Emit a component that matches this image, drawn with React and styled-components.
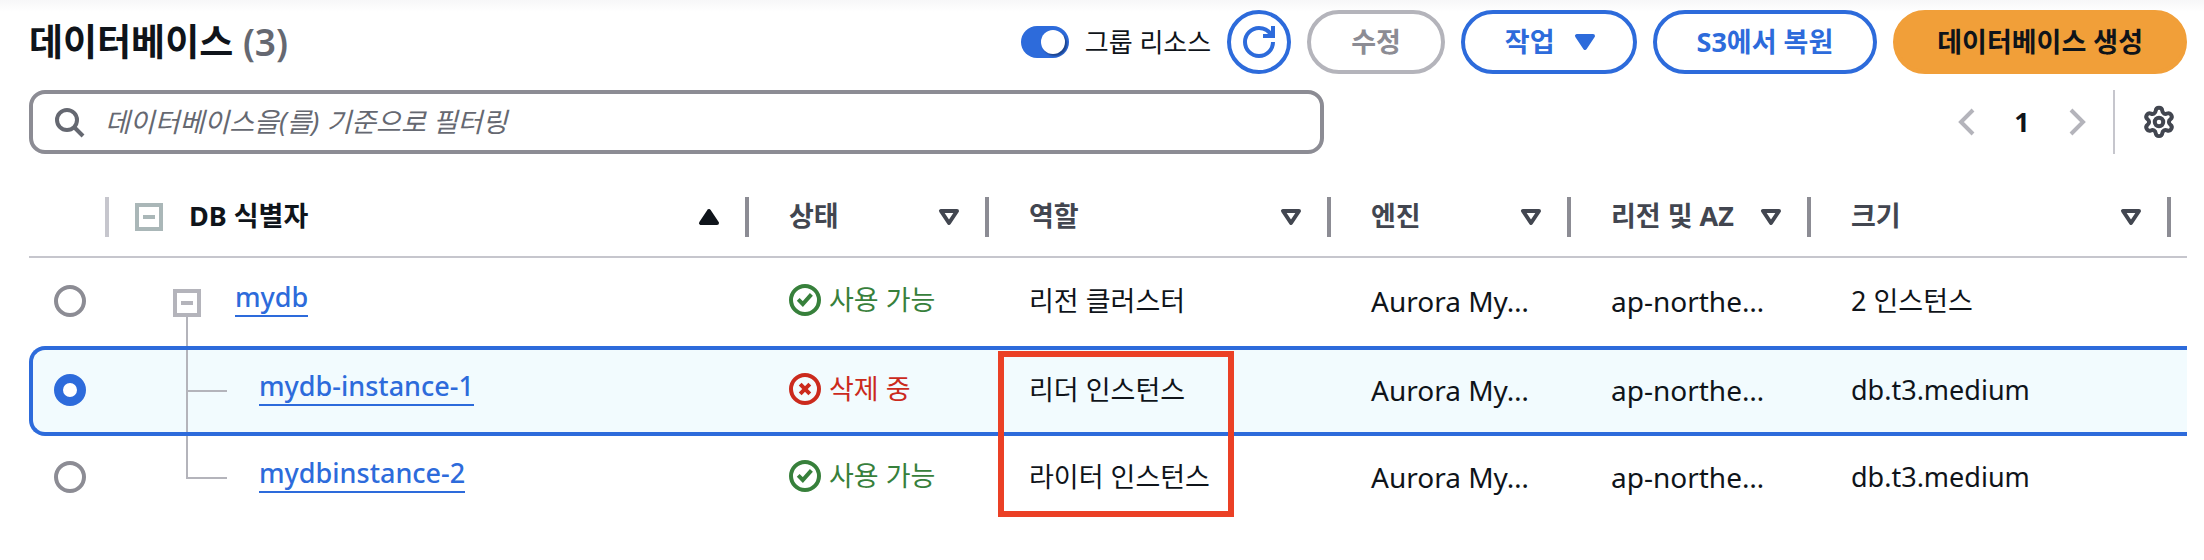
import React, { useState } from "react";
import styled, { createGlobalStyle } from "styled-components";
// Import icons
import { Settings } from "lucide-react";

const rows = [
  {
    id: "mydb",
    level: "root",
    status: "ok",
    statusText: "사용 가능",
    role: "리전 클러스터",
    size: "2 인스턴스",
  },
  {
    id: "mydb-instance-1",
    level: "middle",
    status: "error",
    statusText: "삭제 중",
    role: "리더 인스턴스",
    size: "db.t3.medium",
    marked: true,
  },
  {
    id: "mydbinstance-2",
    level: "last",
    status: "ok",
    statusText: "사용 가능",
    role: "라이터 인스턴스",
    size: "db.t3.medium",
  },
];

const columns = ["상태", "역할", "엔진", "리전 및 AZ", "크기"];

function StatusIcon({ status }) {
  return (
    <Icon viewBox="0 0 16 16" aria-hidden="true">
      <circle cx="8" cy="8" r="7" />
      {status === "ok" ? (
        <path d="M4.6 7.7 6.9 10l4.300-4.800" />
      ) : (
        <path d="m10.400 5.600-4.800 4.800M5.600 5.600l4.800 4.800" />
      )}
    </Icon>
  );
}

function SortIcon({ active }) {
  return (
    <Icon viewBox="0 0 16 16" $join="round" aria-hidden="true">
      {active ? (
        <path d="M4 11h8L8 5z" fill="currentColor" />
      ) : (
        <path d="M4 5h8l-4 6z" />
      )}
    </Icon>
  );
}

function App() {
  const [selected, setSelected] = useState("mydb-instance-1");
  const [grouped, setGrouped] = useState(true);

  return (
    <Page>
      <GlobalStyle />
      <Header>
        <Title>
          데이터베이스 <span>(3)</span>
        </Title>
        <Actions>
          <ToggleLabel>
            <Toggle
              type="checkbox"
              role="switch"
              checked={grouped}
              onChange={() => setGrouped(!grouped)}
            />
            그룹 리소스
          </ToggleLabel>
          <RefreshButton aria-label="새로 고침">
            <Icon viewBox="0 0 16 16" aria-hidden="true">
              <path d="M15 8c0 3.87-3.13 7-7 7s-7-3.13-7-7 3.13-7 7-7c2.79 0 5.2 1.63 6.33 4" />
              <path d="M10 5h5V0" />
            </Icon>
          </RefreshButton>
          <Button disabled>수정</Button>
          <MenuButton aria-haspopup="menu">
            작업
            <Icon viewBox="0 0 16 16" $join="round" aria-hidden="true">
              <path d="M4 5h8l-4 6z" fill="currentColor" />
            </Icon>
          </MenuButton>
          <Button>S3에서 복원</Button>
          <PrimaryButton>데이터베이스 생성</PrimaryButton>
        </Actions>
      </Header>

      <Tools>
        <Filter>
          <Icon viewBox="0 0 16 16" aria-hidden="true">
            <circle cx="7" cy="7" r="5" />
            <path d="m15 15-4.5-4.5" />
          </Icon>
          <FilterInput
            type="search"
            aria-label="데이터베이스 필터링"
            placeholder="데이터베이스을(를) 기준으로 필터링"
          />
        </Filter>
        <Pagination aria-label="페이지">
          <PageButton disabled aria-label="이전 페이지">
            <Icon viewBox="0 0 16 16" aria-hidden="true">
              <path d="M11 2 5 8l6 6" />
            </Icon>
          </PageButton>
          <PageNumber aria-current="page">1</PageNumber>
          <PageButton disabled aria-label="다음 페이지">
            <Icon viewBox="0 0 16 16" aria-hidden="true">
              <path d="m5 2 6 6-6 6" />
            </Icon>
          </PageButton>
          <SettingsButton aria-label="기본 설정">
            <Settings size={34} strokeWidth={2.8} />
          </SettingsButton>
        </Pagination>
      </Tools>

      <Table>
        <colgroup>
          <Col $width={80} />
          <Col $width={640} />
          <Col $width={240} />
          <Col $width={342} />
          <Col $width={240} />
          <Col $width={240} />
          <Col />
          <Col $width={16} />
        </colgroup>
        <thead>
          <tr>
            <HeadCell $light aria-label="선택">
              <HeadInner />
            </HeadCell>
            <HeadCell $first aria-sort="ascending">
              <HeadInner $active>
                <HeadToggle aria-label="모두 접기" />
                <HeadText>DB 식별자</HeadText>
                <SortIcon active />
              </HeadInner>
            </HeadCell>
            {columns.map((name) => (
              <HeadCell key={name}>
                <HeadInner>
                  <HeadText>{name}</HeadText>
                  <SortIcon />
                </HeadInner>
              </HeadCell>
            ))}
            <HeadCell as="td" />
          </tr>
        </thead>
        <tbody>
          {rows.map((row) => (
            <Row key={row.id} $selected={selected === row.id}>
              <RadioCell>
                <Radio
                  type="radio"
                  name="database"
                  aria-label={row.id}
                  checked={selected === row.id}
                  onChange={() => setSelected(row.id)}
                />
              </RadioCell>
              <TreeCell>
                <TreeInner>
                  {row.level === "root" ? (
                    <Trunk>
                      <TreeToggle aria-label="접기" />
                    </Trunk>
                  ) : (
                    <Branch $last={row.level === "last"} />
                  )}
                  <DbLink href="#">{row.id}</DbLink>
                </TreeInner>
              </TreeCell>
              <Cell>
                <Status $status={row.status}>
                  <StatusIcon status={row.status} />
                  {row.statusText}
                </Status>
              </Cell>
              <Cell>
                {row.role}
                {row.marked && <Marker />}
              </Cell>
              <Cell $latin>Aurora My…</Cell>
              <Cell $latin>ap-northe…</Cell>
              <Cell>{row.size}</Cell>
              <Cell />
            </Row>
          ))}
        </tbody>
      </Table>
    </Page>
  );
}

const GlobalStyle = createGlobalStyle`
  * {
    box-sizing: border-box;
  }
  body {
    margin: 0;
    background: #fff;
    color: #0f141a;
    font-family: "Noto Sans", "Noto Sans CJK KR", sans-serif;
    font-size: 27px;
    line-height: 40px;
  }
  button,
  input {
    font: inherit;
    margin: 0;
  }
`;

const Page = styled.main`
  padding: 10px 17px 36px 29px;
  background: linear-gradient(#f7f7f8, #fff 12px);
`;

const Icon = styled.svg`
  flex: none;
  width: 32px;
  height: 32px;
  overflow: visible;
  fill: none;
  stroke: currentColor;
  stroke-width: 2;
  stroke-linejoin: ${({ $join }) => $join || "miter"};
`;

const Header = styled.header`
  display: flex;
  align-items: center;
  justify-content: space-between;
  margin-bottom: 16px;
`;

const Title = styled.h1`
  margin: 0;
  font-size: 37px;
  line-height: 48px;
  font-weight: 700;
  span {
    color: #656871;
    font-weight: 600;
  }
`;

const Actions = styled.div`
  display: flex;
  align-items: center;
  gap: 16px;
`;

const ToggleLabel = styled.label`
  display: flex;
  align-items: center;
  gap: 16px;
  font-size: 26px;
`;

const Toggle = styled.input`
  appearance: none;
  display: flex;
  width: 48px;
  height: 32px;
  padding: 4px;
  border-radius: 16px;
  background: #8c8c94;
  &::before {
    content: "";
    width: 24px;
    height: 24px;
    border-radius: 50%;
    background: #fff;
    box-shadow: 2px 2px 2px rgba(0, 7, 22, 0.4);
  }
  &:checked {
    justify-content: flex-end;
    background: #2d6bdb;
  }
`;

const Button = styled.button`
  display: flex;
  align-items: center;
  height: 64px;
  padding: 0 40px;
  border: 4px solid currentColor;
  border-radius: 32px;
  background: #fff;
  color: #2d6bdb;
  font-weight: 700;
  white-space: nowrap;
  &:disabled {
    border-color: #b4b4bb;
    color: #8c8c94;
  }
`;

const MenuButton = styled(Button)`
  gap: 14px;
  padding-right: 32px;
`;

const RefreshButton = styled(Button)`
  justify-content: center;
  width: 64px;
  padding: 0;
`;

const PrimaryButton = styled(Button)`
  border-color: #f19f39;
  background: #f19f39;
  color: #0f141a;
`;

const Tools = styled.div`
  display: flex;
  align-items: center;
  justify-content: space-between;
`;

const Filter = styled.div`
  display: flex;
  align-items: center;
  gap: 20px;
  width: 60%;
  height: 64px;
  padding: 0 20px;
  border: 4px solid #8c8c94;
  border-radius: 16px;
  background: #fff;
  color: #656871;
`;

const FilterInput = styled.input`
  flex: 1;
  min-width: 0;
  padding: 0;
  border: 0;
  outline: 0;
  background: none;
  &::placeholder {
    color: #656871;
    font-style: italic;
    opacity: 1;
  }
`;

const Pagination = styled.nav`
  display: flex;
  align-items: center;
  gap: 16px;
`;

const PageButton = styled.button`
  display: flex;
  padding: 0;
  border: 0;
  background: none;
  color: #b4b4bb;
`;

const PageNumber = styled.span`
  width: 46px;
  font-weight: 700;
  text-align: center;
`;

const SettingsButton = styled(PageButton)`
  align-items: center;
  height: 64px;
  margin-left: 4px;
  padding: 0 11px 0 27px;
  border-left: 2px solid #c6c6cd;
  color: #424650;
`;

const Table = styled.table`
  width: 100%;
  margin-top: 24px;
  table-layout: fixed;
  border-collapse: separate;
  border-spacing: 0;
`;

const Col = styled.col`
  width: ${({ $width }) => ($width ? `${$width}px` : "auto")};
`;

const HeadCell = styled.th`
  height: 80px;
  padding: 0 0 0 ${({ $first }) => ($first ? "26px" : "40px")};
  border-bottom: 2px solid #c6c6cd;
  text-align: left;
  > div {
    border-color: ${({ $light }) => ($light ? "#c6c6cd" : "#8c8c94")};
  }
`;

const HeadInner = styled.div`
  display: flex;
  align-items: center;
  height: 40px;
  padding-right: 20px;
  border-right: 4px solid;
  color: ${({ $active }) => ($active ? "#0f141a" : "#424650")};
`;

const HeadText = styled.span`
  flex: 1;
  padding-bottom: 2px;
  white-space: nowrap;
`;

const TreeToggle = styled.button`
  display: flex;
  flex: none;
  align-items: center;
  justify-content: center;
  width: 28px;
  height: 28px;
  padding: 0;
  border: 4px solid #b4b4bb;
  background: #fff;
  &::before {
    content: "";
    width: 12px;
    height: 4px;
    background: #b4b4bb;
  }
`;

const HeadToggle = styled(TreeToggle)`
  margin-right: 26px;
  border-color: #aab7b8;
  &::before {
    background: #aab7b8;
  }
`;

const Cell = styled.td`
  position: relative;
  height: 88px;
  padding: 0 0 2px 40px;
  font-size: ${({ $latin }) => ($latin ? "28px" : "27px")};
  white-space: nowrap;
`;

const Row = styled.tr`
  ${({ $selected }) =>
    $selected &&
    `
    ${Cell} {
      height: 90px;
      border-top: 4px solid #2d6bdb;
      border-bottom: 4px solid #2d6bdb;
      background: #f2fbfe;
    }
    ${Cell}:first-child {
      padding-left: 21px;
      border-left: 4px solid #2d6bdb;
      border-radius: 16px 0 0 16px;
    }
  `}
  &:last-child ${Cell} {
    height: 84px;
  }
`;

const RadioCell = styled(Cell)`
  padding-left: 25px;
`;

const Radio = styled.input`
  appearance: none;
  display: block;
  width: 32px;
  height: 32px;
  border: 4px solid #8c8c94;
  border-radius: 50%;
  background: #fff;
  &:checked {
    border: 9px solid #2d6bdb;
  }
`;

const TreeCell = styled(Cell)`
  padding: 0 0 0 64px;
`;

const TreeInner = styled.div`
  display: flex;
  align-items: center;
  height: 100%;
`;

const Trunk = styled.div`
  display: flex;
  flex-direction: column;
  align-items: center;
  align-self: stretch;
  margin-right: 34px;
  padding-top: 31px;
  &::after {
    content: "";
    flex: 1;
    width: 2px;
    background: #b4b4bb;
  }
`;

const Branch = styled.div`
  align-self: stretch;
  width: 41px;
  margin: 0 32px 0 13px;
  background: ${({ $last }) =>
    $last
      ? "linear-gradient(#b4b4bb, #b4b4bb) 0 0 / 2px 50% no-repeat,"
      : "linear-gradient(#b4b4bb, #b4b4bb) 0 0 / 2px 100% no-repeat,"}
    linear-gradient(#b4b4bb, #b4b4bb) 0 50% / 100% 2px no-repeat;
`;

const DbLink = styled.a`
  margin-bottom: 8px;
  border-bottom: 2px solid;
  color: #2d6bdb;
  font-weight: 500;
  line-height: 36px;
  text-decoration: none;
`;

const Status = styled.span`
  display: flex;
  align-items: center;
  gap: 8px;
  margin-bottom: 2px;
  color: ${({ $status }) => ($status === "ok" ? "#37803b" : "#cb2a1d")};
`;

// Frame drawn over the reader and writer role cells
const Marker = styled.div`
  position: absolute;
  z-index: 1;
  top: 1px;
  left: 9px;
  width: 236px;
  height: 166px;
  border: 6px solid #eb4025;
  pointer-events: none;
`;

export default App;
